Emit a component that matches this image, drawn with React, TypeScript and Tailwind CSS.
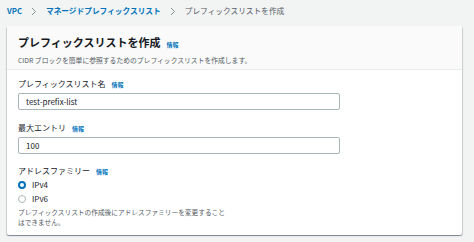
import React from "react";

const font = { fontFamily: '"Noto Sans CJK JP", "Liberation Sans", sans-serif' };

function Info() {
  return <span className="ml-[6px] text-[6px] font-bold text-[#0073bb]">情報</span>;
}

function Chevron() {
  return (
    <svg width="6" height="9" viewBox="0 0 6 9" className="mx-[9px]">
      <path d="M1 1l3.5 3.5L1 8" fill="none" stroke="#879596" strokeWidth="1" />
    </svg>
  );
}

export default function App() {
  return (
    <div
      className="w-[474px] h-[242px] bg-[#f2f3f3] overflow-hidden text-[#16191f]"
      style={font}
    >
      <nav className="flex items-center h-[22px] pl-[7px] text-[7.7px]">
        <span className="font-bold text-[#0073bb]">VPC</span>
        <Chevron />
        <span className="font-bold text-[#0073bb]">マネージドプレフィックスリスト</span>
        <Chevron />
        <span className="text-[#545b64]">プレフィックスリストを作成</span>
      </nav>

      <div className="ml-[7px] mt-[4px] w-[455px] h-[209px] bg-white rounded-[2px] shadow-[0_1px_1px_0_rgba(0,28,36,0.3),1px_1px_1px_0_rgba(0,28,36,0.15),-1px_1px_1px_0_rgba(0,28,36,0.15)] overflow-hidden">
        <div className="h-[44px] bg-[#fafafa] border-b border-[#eaeded] px-[11px] pt-[8px]">
          <div className="flex items-baseline leading-[16px]">
            <span className="text-[11px] font-bold">プレフィックスリストを作成</span>
            <Info />
          </div>
          <div className="text-[6.8px] leading-[10px] mt-[2px] text-[#545b64]">
            CIDR ブロックを簡単に参照するためのプレフィックスリストを作成します。
          </div>
        </div>

        <div className="px-[11px] pt-[7px]">
          <div className="flex items-baseline h-[14px] leading-[14px] text-[8px]">
            <span>プレフィックスリスト名</span>
            <Info />
          </div>
          <div className="mt-[2px] w-[322px] h-[17px] border border-[#aab7b8] rounded-[2px] flex items-center px-[7px] text-[8px]">
            test-prefix-list
          </div>

          <div className="mt-[11px] flex items-baseline h-[14px] leading-[14px] text-[8px]">
            <span>最大エントリ</span>
            <Info />
          </div>
          <div className="mt-[2px] w-[322px] h-[17px] border border-[#aab7b8] rounded-[2px] flex items-center px-[7px] text-[8px]">
            100
          </div>

          <div className="mt-[10px] flex items-baseline h-[14px] leading-[14px] text-[8px]">
            <span>アドレスファミリー</span>
            <Info />
          </div>
          <div className="flex items-center h-[14px] text-[8px]">
            <span className="w-[8px] h-[8px] rounded-full border-[2.5px] border-[#0073bb] bg-white" />
            <span className="ml-[6px]">IPv4</span>
          </div>
          <div className="flex items-center h-[14px] text-[8px]">
            <span className="w-[8px] h-[8px] rounded-full border border-[#aab7b8] bg-white" />
            <span className="ml-[6px]">IPv6</span>
          </div>
          <div className="w-[210px] text-[6.7px] leading-[10px] mt-[1px] text-[#545b64]">
            プレフィックスリストの作成後にアドレスファミリーを変更することはできません。
          </div>
        </div>
      </div>
    </div>
  );
}
